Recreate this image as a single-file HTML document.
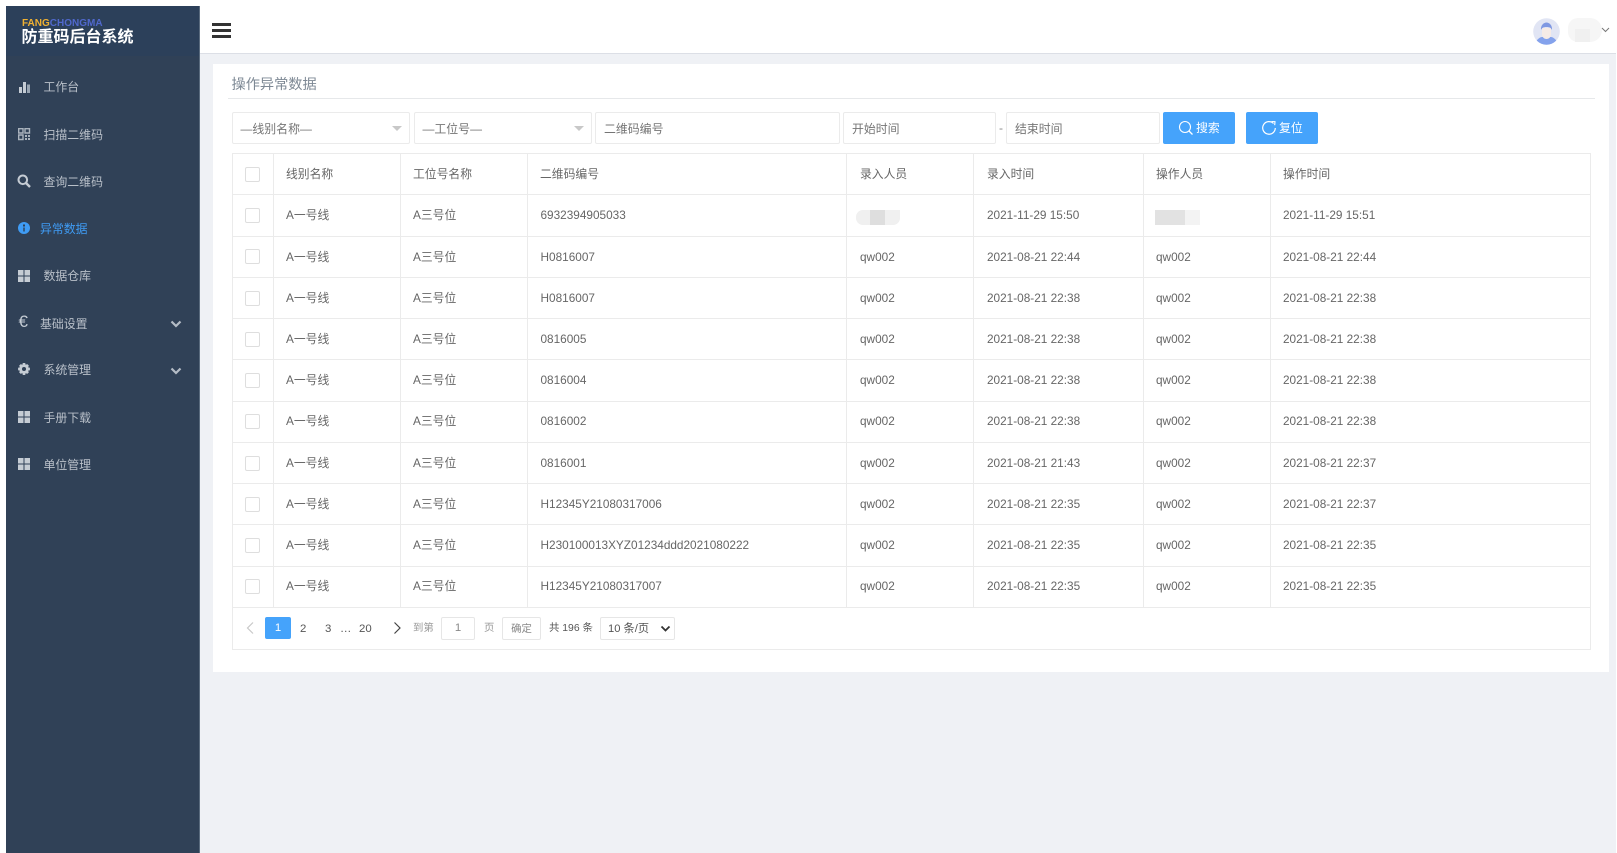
<!DOCTYPE html>
<html lang="zh"><head><meta charset="utf-8"><title>防重码后台系统</title>
<style>
*{box-sizing:border-box}
html,body{margin:0;padding:0;width:1617px;height:853px;overflow:hidden;background:#fff;font-family:"Liberation Sans","Noto Sans CJK SC",sans-serif;color:#666}
div,span{position:absolute}
.t{white-space:nowrap;line-height:16px}
.m{left:43.500px;color:#b9c0c9;font-size:11.900px;white-space:nowrap;line-height:16px}
.ic{left:17px;width:14px;height:14px}
.box{border:1px solid #ebebeb;border-radius:2px;background:#fff;height:32px;top:112px;font-size:11.900px;color:#757575;line-height:32px;padding-left:8px;white-space:nowrap}
.arr{width:0;height:0;border-left:5.500px solid transparent;border-right:5.500px solid transparent;border-top:5.500px solid #c8c8c8;top:126px}
.btn{top:112px;height:32px;width:72px;background:#45a3fb;border-radius:2px;color:#fff;font-size:11.900px;line-height:33px;padding-left:33px}
.vl{top:153px;height:496px;width:1px;background:#ebebeb}
.hl{left:232px;width:1359px;height:1px;background:#ebebeb}
.c{font-size:11.800px;color:#666;white-space:nowrap;line-height:16px}
.cb{left:245px;width:15px;height:15px;border:1px solid #dedede;border-radius:2px;background:#fff}
.pg{font-size:11.400px;color:#555;line-height:16px;top:620px;white-space:nowrap}
</style></head><body>
<div style="left:6px;top:54px;width:1610px;height:799px;background:#eff1f5"></div>
<div style="left:199px;top:0;width:1417px;height:54px;background:#fff;border-bottom:1px solid #dcdfe6"></div>
<div style="left:1616px;top:0;width:1px;height:853px;background:#fff"></div>

<div style="left:6px;top:6px;width:194px;height:847px;background:#304157;border-right:1px solid #5a6b7e"></div>
<div style="left:6px;top:6px;width:193px;height:50px;background:#2c405a"></div>
<div class="t" style="left:22px;top:17.500px;font-size:10px;line-height:12px;font-weight:700"><span style="position:static;color:#f0b132">FANG</span><span style="position:static;color:#5068cc">CHONGMA</span></div>
<div class="t" style="left:21.500px;top:28px;font-size:16px;line-height:20px;font-weight:700;color:#fff">防重码后台系统</div>

<svg class="ic" style="position:absolute;top:80px" viewBox="0 0 14 14"><path fill="#c5ccd4" d="M2 7h3v6H2zM6 2h3v11H6z"/><path fill="#9aa6b3" d="M10 4.500h3V13h-3z"/></svg>
<div class="m" style="top:79px">工作台</div>
<svg class="ic" style="position:absolute;top:126.500px" viewBox="0 0 14 14"><path fill="none" stroke="#aab3bd" stroke-width="1.400" d="M1.700 1.700h4.300v4.300H1.700zM8 1.700h4.500v4.300H8zM1.700 8h4.300v4.500H1.700z"/><path fill="#aab3bd" d="M8 8h2v2H8zM11 8h2v2h-2zM8 11h2v2H8zM11 11h2v2h-2z"/></svg>
<div class="m" style="top:127px">扫描二维码</div>
<svg class="ic" style="position:absolute;top:174px" viewBox="0 0 14 14"><circle cx="5.800" cy="5.800" r="4.300" fill="none" stroke="#c5ccd4" stroke-width="2"/><path stroke="#c5ccd4" stroke-width="2.400" d="M9 9l4 4"/></svg>
<div class="m" style="top:174px">查询二维码</div>
<svg class="ic" style="position:absolute;top:221px" viewBox="0 0 14 14"><circle cx="7" cy="7" r="6" fill="#3f9cf5"/><path fill="#2f4056" d="M6 3.500h2v2H6zM6.300 6.500h1.400v4H6.300z"/></svg>
<div class="m" style="top:221px;left:40px;color:#3f9cf5">异常数据</div>
<svg class="ic" style="position:absolute;top:269px" viewBox="0 0 14 14"><path fill="#c5ccd4" d="M1 1h5.500v5.500H1zM7.500 1H13v5.500H7.500zM1 7.500h5.500V13H1zM7.500 7.500H13V13H7.500z"/></svg>
<div class="m" style="top:268px">数据仓库</div>
<div style="left:18.500px;top:312px;font-size:17px;line-height:20px;color:#c5ccd4">€</div>
<div class="m" style="top:315.500px;left:40px">基础设置</div>
<svg style="position:absolute;left:170px;top:319px" width="12" height="10" viewBox="0 0 12 10"><path d="M1.500 2.500L6 7l4.500-4.500" fill="none" stroke="#b4bcc6" stroke-width="2.200"/></svg>
<svg class="ic" style="position:absolute;top:362px" viewBox="0 0 14 14"><path fill="#c5ccd4" d="M5.800 1h2.400l.4 1.800 1.700-.7 1.600 1.600-.9 1.600 1.900.5v2.400l-1.900.5.9 1.600-1.600 1.600-1.700-.8-.4 1.900H5.800l-.4-1.900-1.700.8-1.600-1.600.9-1.600L1.100 8.200V5.800l1.900-.5-.9-1.600 1.600-1.600 1.700.7z"/><circle cx="7" cy="7" r="2" fill="#2f4056"/></svg>
<div class="m" style="top:362px">系统管理</div>
<svg style="position:absolute;left:170px;top:366px" width="12" height="10" viewBox="0 0 12 10"><path d="M1.500 2.500L6 7l4.500-4.500" fill="none" stroke="#b4bcc6" stroke-width="2.200"/></svg>
<svg class="ic" style="position:absolute;top:410px" viewBox="0 0 14 14"><path fill="#c5ccd4" d="M1 1h5.500v5.500H1zM7.500 1H13v5.500H7.500zM1 7.500h5.500V13H1zM7.500 7.500H13V13H7.500z"/></svg>
<div class="m" style="top:409.500px">手册下载</div>
<svg class="ic" style="position:absolute;top:457px" viewBox="0 0 14 14"><path fill="#c5ccd4" d="M1 1h5.500v5.500H1zM7.500 1H13v5.500H7.500zM1 7.500h5.500V13H1zM7.500 7.500H13V13H7.500z"/></svg>
<div class="m" style="top:457px">单位管理</div>

<div style="left:212px;top:22.500px;width:19px;height:3.500px;background:#333"></div>
<div style="left:212px;top:28.500px;width:19px;height:3.500px;background:#333"></div>
<div style="left:212px;top:34.500px;width:19px;height:3.500px;background:#333"></div>
<svg style="position:absolute;left:1532.500px;top:17.500px" width="27" height="27" viewBox="0 0 27 27"><defs><clipPath id="a"><circle cx="13.500" cy="13.500" r="13.300"/></clipPath></defs><circle cx="13.500" cy="13.500" r="13.300" fill="#e1e5f4"/><g clip-path="url(#a)"><path fill="#84a2ec" d="M2 27c.5-5 5-8 7-8h9c2 0 6.500 3 7 8z"/><path fill="#f6ebe6" d="M9 10h9v6c0 3-2 5-4.500 5S9 19 9 16z"/><path fill="#7f98e2" d="M8 12c-.5-5 3-7.500 5.500-7.500S19.500 7 19 12c-1-2-2-3-5.500-3S9 10 8 12z"/></g></svg>
<div style="left:1568px;top:18px;width:34px;height:24px;background:#f6f6f6;border-radius:10px 12px 12px 10px"></div>
<div style="left:1575px;top:29px;width:15px;height:13px;background:#f0f0f0"></div>
<svg style="position:absolute;left:1601px;top:27px" width="9" height="6" viewBox="0 0 9 6"><path d="M1 1l3.500 3.500L8 1" fill="none" stroke="#777" stroke-width="1"/></svg>

<div style="left:212.500px;top:64px;width:1396.500px;height:608px;background:#fff"></div>
<div class="t" style="left:231.500px;top:76px;font-size:14.200px;line-height:18px;color:#7d8894">操作异常数据</div>
<div style="left:228px;top:98px;width:1367px;height:1px;background:#e6e8ea"></div>

<div class="box" style="left:231.500px;width:178.500px">—线别名称—</div><div class="arr" style="left:391.500px"></div>
<div class="box" style="left:413.500px;width:178.500px">—工位号—</div><div class="arr" style="left:573.500px"></div>
<div class="box" style="left:595px;width:245px">二维码编号</div>
<div class="box" style="left:843px;width:153px">开始时间</div>
<div class="t" style="left:999px;top:120px;font-size:12px;color:#888">-</div>
<div class="box" style="left:1006px;width:154px">结束时间</div>
<div class="btn" style="left:1163px">搜索</div>
<svg style="position:absolute;left:1178px;top:120px" width="16" height="16" viewBox="0 0 16 16"><circle cx="7" cy="7" r="5.500" fill="none" stroke="#fff" stroke-width="1.100"/><path d="M11 11l3.500 3.500" stroke="#fff" stroke-width="1.300"/></svg>
<div class="btn" style="left:1246px">复位</div>
<svg style="position:absolute;left:1261px;top:120px" width="16" height="16" viewBox="0 0 16 16"><path d="M12.500 3.500A6.300 6.300 0 1 0 14.300 8" fill="none" stroke="#fff" stroke-width="1.200"/><path d="M10.500 1.500l3.500.2-.3 3.500" fill="none" stroke="#fff" stroke-width="1.100"/></svg>

<div style="left:231.500px;top:153px;width:1359.500px;height:497px;border:1px solid #ebebeb"></div>
<div class="vl" style="left:273px"></div><div class="vl" style="left:400px"></div><div class="vl" style="left:527px"></div><div class="vl" style="left:846px"></div><div class="vl" style="left:973px"></div><div class="vl" style="left:1143px"></div><div class="vl" style="left:1270px"></div>
<div style="left:232.500px;top:608px;width:1357.500px;height:41px;background:#fff"></div>
<div class="hl" style="top:194px"></div><div class="hl" style="top:236px"></div><div class="hl" style="top:277px"></div><div class="hl" style="top:318px"></div><div class="hl" style="top:359px"></div><div class="hl" style="top:401px"></div><div class="hl" style="top:442px"></div><div class="hl" style="top:483px"></div><div class="hl" style="top:524px"></div><div class="hl" style="top:566px"></div><div class="hl" style="top:607px"></div>

<div class="cb" style="top:167px"></div><div class="c" style="left:286px;top:166px">线别名称</div><div class="c" style="left:413px;top:166px">工位号名称</div><div class="c" style="left:540px;top:166px">二维码编号</div><div class="c" style="left:860px;top:166px">录入人员</div><div class="c" style="left:987px;top:166px">录入时间</div><div class="c" style="left:1156px;top:166px">操作人员</div><div class="c" style="left:1283px;top:166px">操作时间</div>

<div class="cb" style="top:208px"></div><div class="c" style="left:286px;top:207px">A一号线</div><div class="c" style="left:413px;top:207px">A三号位</div><div class="c" style="left:540.500px;top:207px">6932394905033</div><div style="left:856px;top:210px;width:44px;height:15px;background:#f0f0f0;border-radius:7px 0 7px 7px"></div><div style="left:870px;top:210px;width:15px;height:15px;background:#dedede"></div><div class="c" style="left:987px;top:207px">2021-11-29 15:50</div><div style="left:1155px;top:210px;width:45px;height:15px;background:#f3f3f3"></div><div style="left:1155px;top:210px;width:30px;height:15px;background:#e2e2e2"></div><div class="c" style="left:1283px;top:207px">2021-11-29 15:51</div>

<div class="cb" style="top:249px"></div><div class="c" style="left:286px;top:249px">A一号线</div><div class="c" style="left:413px;top:249px">A三号位</div><div class="c" style="left:540.500px;top:249px">H0816007</div><div class="c" style="left:860px;top:249px">qw002</div><div class="c" style="left:987px;top:249px">2021-08-21 22:44</div><div class="c" style="left:1156px;top:249px">qw002</div><div class="c" style="left:1283px;top:249px">2021-08-21 22:44</div>

<div class="cb" style="top:291px"></div><div class="c" style="left:286px;top:290px">A一号线</div><div class="c" style="left:413px;top:290px">A三号位</div><div class="c" style="left:540.500px;top:290px">H0816007</div><div class="c" style="left:860px;top:290px">qw002</div><div class="c" style="left:987px;top:290px">2021-08-21 22:38</div><div class="c" style="left:1156px;top:290px">qw002</div><div class="c" style="left:1283px;top:290px">2021-08-21 22:38</div>

<div class="cb" style="top:332px"></div><div class="c" style="left:286px;top:331px">A一号线</div><div class="c" style="left:413px;top:331px">A三号位</div><div class="c" style="left:540.500px;top:331px">0816005</div><div class="c" style="left:860px;top:331px">qw002</div><div class="c" style="left:987px;top:331px">2021-08-21 22:38</div><div class="c" style="left:1156px;top:331px">qw002</div><div class="c" style="left:1283px;top:331px">2021-08-21 22:38</div>

<div class="cb" style="top:373px"></div><div class="c" style="left:286px;top:372px">A一号线</div><div class="c" style="left:413px;top:372px">A三号位</div><div class="c" style="left:540.500px;top:372px">0816004</div><div class="c" style="left:860px;top:372px">qw002</div><div class="c" style="left:987px;top:372px">2021-08-21 22:38</div><div class="c" style="left:1156px;top:372px">qw002</div><div class="c" style="left:1283px;top:372px">2021-08-21 22:38</div>

<div class="cb" style="top:414px"></div><div class="c" style="left:286px;top:413px">A一号线</div><div class="c" style="left:413px;top:413px">A三号位</div><div class="c" style="left:540.500px;top:413px">0816002</div><div class="c" style="left:860px;top:413px">qw002</div><div class="c" style="left:987px;top:413px">2021-08-21 22:38</div><div class="c" style="left:1156px;top:413px">qw002</div><div class="c" style="left:1283px;top:413px">2021-08-21 22:38</div>

<div class="cb" style="top:456px"></div><div class="c" style="left:286px;top:455px">A一号线</div><div class="c" style="left:413px;top:455px">A三号位</div><div class="c" style="left:540.500px;top:455px">0816001</div><div class="c" style="left:860px;top:455px">qw002</div><div class="c" style="left:987px;top:455px">2021-08-21 21:43</div><div class="c" style="left:1156px;top:455px">qw002</div><div class="c" style="left:1283px;top:455px">2021-08-21 22:37</div>

<div class="cb" style="top:497px"></div><div class="c" style="left:286px;top:496px">A一号线</div><div class="c" style="left:413px;top:496px">A三号位</div><div class="c" style="left:540.500px;top:496px">H12345Y21080317006</div><div class="c" style="left:860px;top:496px">qw002</div><div class="c" style="left:987px;top:496px">2021-08-21 22:35</div><div class="c" style="left:1156px;top:496px">qw002</div><div class="c" style="left:1283px;top:496px">2021-08-21 22:37</div>

<div class="cb" style="top:538px"></div><div class="c" style="left:286px;top:537px">A一号线</div><div class="c" style="left:413px;top:537px">A三号位</div><div class="c" style="left:540.500px;top:537px">H230100013XYZ01234ddd2021080222</div><div class="c" style="left:860px;top:537px">qw002</div><div class="c" style="left:987px;top:537px">2021-08-21 22:35</div><div class="c" style="left:1156px;top:537px">qw002</div><div class="c" style="left:1283px;top:537px">2021-08-21 22:35</div>

<div class="cb" style="top:579px"></div><div class="c" style="left:286px;top:578px">A一号线</div><div class="c" style="left:413px;top:578px">A三号位</div><div class="c" style="left:540.500px;top:578px">H12345Y21080317007</div><div class="c" style="left:860px;top:578px">qw002</div><div class="c" style="left:987px;top:578px">2021-08-21 22:35</div><div class="c" style="left:1156px;top:578px">qw002</div><div class="c" style="left:1283px;top:578px">2021-08-21 22:35</div>

<svg style="position:absolute;left:245px;top:621px" width="10" height="14" viewBox="0 0 10 14"><path d="M8 1.500L2.500 7 8 12.500" fill="none" stroke="#c8c8c8" stroke-width="1.200"/></svg>
<div style="left:265px;top:617px;width:26px;height:22px;background:#45a3fb;border-radius:2px;color:#fff;text-align:center;font-size:11.400px;line-height:22px">1</div>
<div class="pg" style="left:300px;top:620.500px">2</div><div class="pg" style="left:325px;top:620.500px">3</div><div class="pg" style="left:340px;top:620.500px">…</div><div class="pg" style="left:359px;top:620.500px">20</div>
<svg style="position:absolute;left:392px;top:621px" width="10" height="14" viewBox="0 0 10 14"><path d="M2.500 1.500L8 7l-5.500 5.500" fill="none" stroke="#444" stroke-width="1.200"/></svg>
<div class="pg" style="left:413px;top:621px;color:#999;font-size:10.400px">到第</div>
<div style="left:441px;top:617px;width:34px;height:23px;border:1px solid #e6e6e6;border-radius:2px;text-align:center;font-size:11.400px;line-height:21px;color:#888">1</div>
<div class="pg" style="left:484px;top:621px;color:#999;font-size:10.400px">页</div>
<div style="left:502px;top:617px;width:39px;height:23px;border:1px solid #e6e6e6;border-radius:2px;text-align:center;font-size:10.400px;line-height:23px;color:#888">确定</div>
<div class="pg" style="left:549px;top:621px;font-size:10.400px">共 196 条</div>
<div style="left:600px;top:617px;width:75px;height:23px;border:1px solid #e6e6e6;border-radius:2px;font-size:11.200px;line-height:22px;color:#555;padding-left:7px">10 条/页</div>
<svg style="position:absolute;left:660px;top:625px" width="11" height="8" viewBox="0 0 11 8"><path d="M1.500 1.500L5.500 5.500l4-4" fill="none" stroke="#333" stroke-width="1.800"/></svg>
</body></html>
